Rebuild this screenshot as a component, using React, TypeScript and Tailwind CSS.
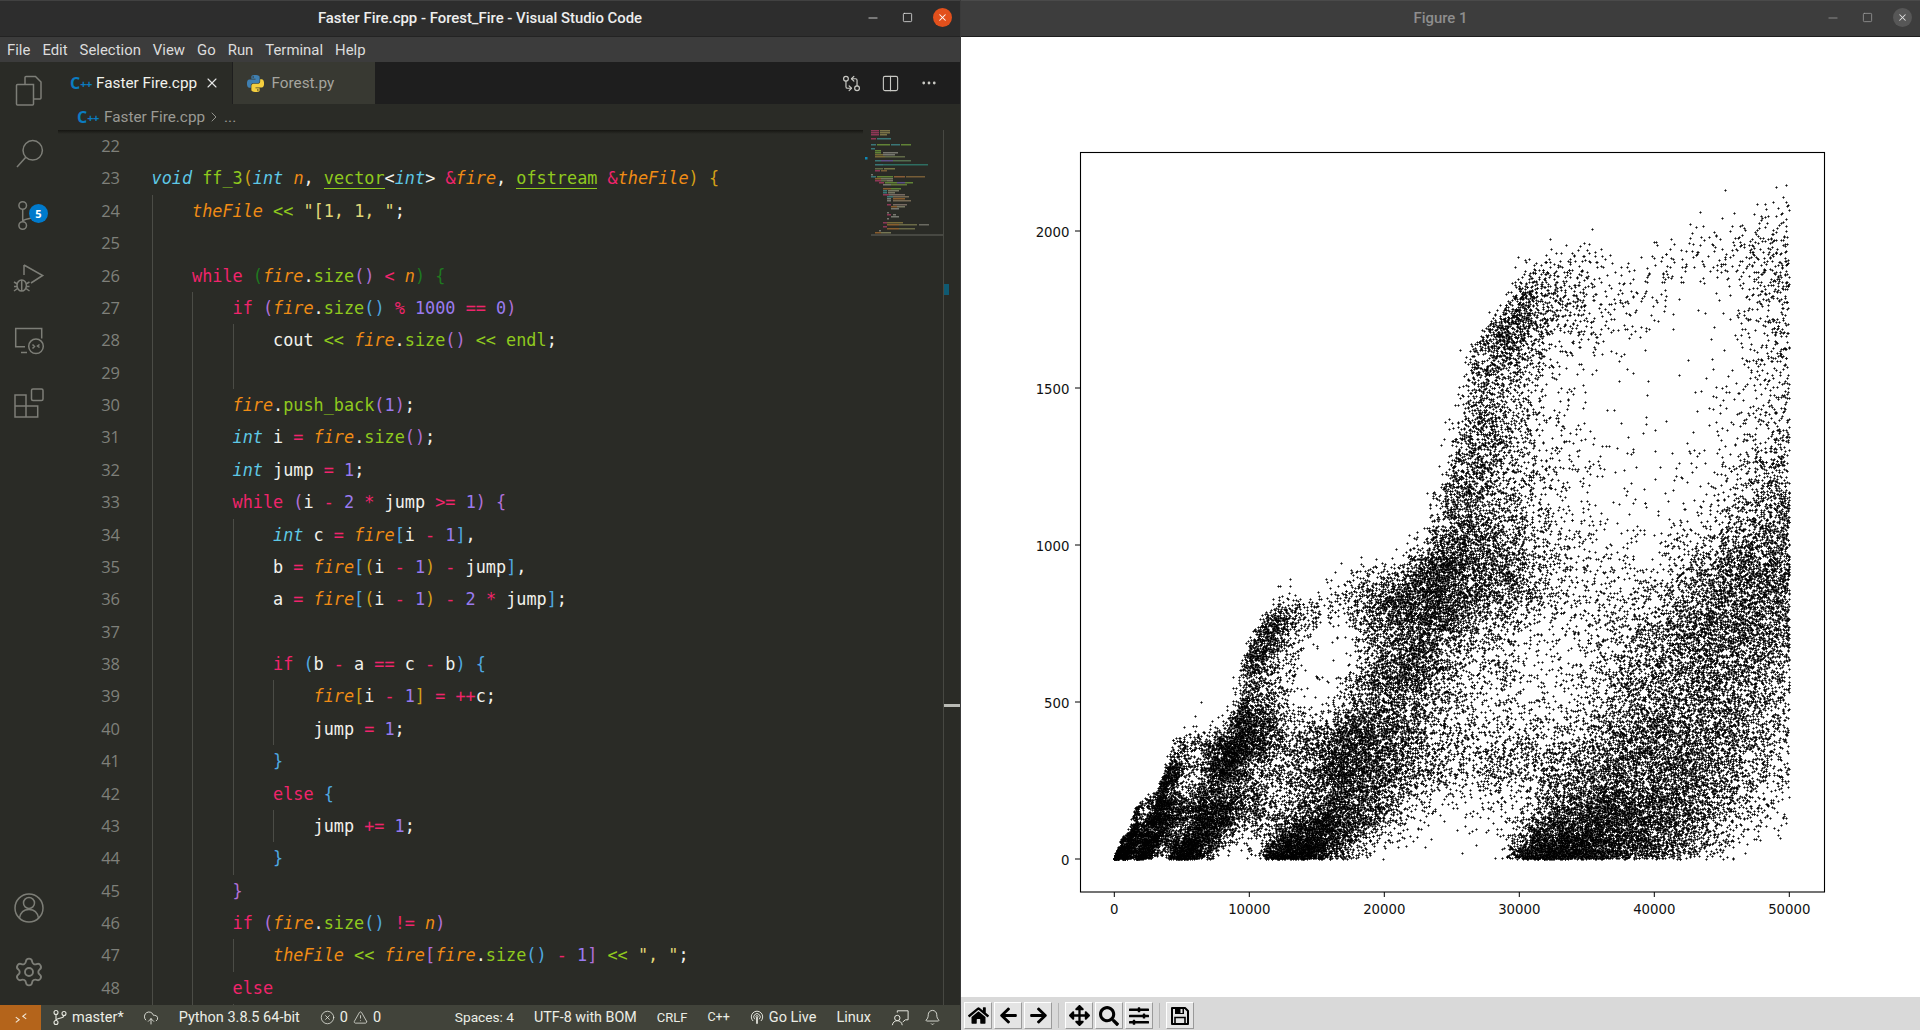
import { useMemo } from "react";
import {
  Bell,
  ChevronRight,
  CircleX,
  CloudUpload,
  Columns2,
  Ellipsis,
  GitCompareArrows,
  Minus,
  Settings,
  Square,
  TriangleAlert,
  X,
} from "lucide-react";
import {
  FaArrowLeft,
  FaArrowRight,
  FaArrowsAlt,
  FaHome,
  FaSearch,
  FaSlidersH,
} from "react-icons/fa";

const K = "text-[#f0246c]";
const T = "italic text-[#5ec8e5]";
const V = "italic text-[#f08c15]";
const F = "text-[#8fc91e]";
const U = "text-[#8fc91e] border-b border-[#8fc91e]";
const N = "text-[#9a7bf0]";
const W = "text-[#f2f2ec]";
const S = "text-[#e2d878]";
const BG = "text-[#d4a017]";
const BP = "text-[#b070d8]";
const BB = "text-[#4fa8e0]";
const BD = "text-[#1f7a1f]";

type Seg = [string, string];
type Row = { n: number; g: number; s: Seg[] };

const fireCall = (a: string): Seg[] => [
  ["fire", V],
  [".", W],
  ["size", F],
  ["(", a],
  [")", a],
];

const rows: Row[] = [
  { n: 22, g: 0, s: [] },
  {
    n: 23,
    g: 0,
    s: [
      ["void", T], [" ", W], ["ff_3", F], ["(", BG], ["int", T], [" ", W], ["n", V], [", ", W],
      ["vector", U], ["<", W], ["int", T], ["> ", W], ["&", K], ["fire", V], [", ", W],
      ["ofstream", U], [" ", W], ["&", K], ["theFile", V], [")", BG], [" ", W], ["{", BG],
    ],
  },
  { n: 24, g: 1, s: [["theFile", V], [" ", W], ["<<", F], [" ", W], ['"[1, 1, "', S], [";", W]] },
  { n: 25, g: 1, s: [] },
  {
    n: 26,
    g: 1,
    s: [["while", K], [" ", W], ["(", BD], ...fireCall(BP), [" ", W], ["<", K], [" ", W], ["n", V], [")", BD], [" ", W], ["{", BD]],
  },
  {
    n: 27,
    g: 2,
    s: [["if", K], [" ", W], ["(", BP], ...fireCall(BB), [" ", W], ["%", K], [" ", W], ["1000", N], [" ", W], ["==", K], [" ", W], ["0", N], [")", BP]],
  },
  {
    n: 28,
    g: 3,
    s: [["cout", W], [" ", W], ["<<", F], [" ", W], ...fireCall(BP), [" ", W], ["<<", F], [" ", W], ["endl", F], [";", W]],
  },
  { n: 29, g: 3, s: [] },
  { n: 30, g: 2, s: [["fire", V], [".", W], ["push_back", F], ["(", BP], ["1", N], [")", BP], [";", W]] },
  { n: 31, g: 2, s: [["int", T], [" i ", W], ["=", K], [" ", W], ...fireCall(BP), [";", W]] },
  { n: 32, g: 2, s: [["int", T], [" jump ", W], ["=", K], [" ", W], ["1", N], [";", W]] },
  {
    n: 33,
    g: 2,
    s: [["while", K], [" ", W], ["(", BP], ["i ", W], ["-", K], [" ", W], ["2", N], [" ", W], ["*", K], [" jump ", W], [">=", K], [" ", W], ["1", N], [")", BP], [" ", W], ["{", BP]],
  },
  {
    n: 34,
    g: 3,
    s: [["int", T], [" c ", W], ["=", K], [" ", W], ["fire", V], ["[", BB], ["i ", W], ["-", K], [" ", W], ["1", N], ["]", BB], [",", W]],
  },
  {
    n: 35,
    g: 3,
    s: [["b ", W], ["=", K], [" ", W], ["fire", V], ["[", BB], ["(", BG], ["i ", W], ["-", K], [" ", W], ["1", N], [")", BG], [" ", W], ["-", K], [" jump", W], ["]", BB], [",", W]],
  },
  {
    n: 36,
    g: 3,
    s: [["a ", W], ["=", K], [" ", W], ["fire", V], ["[", BB], ["(", BG], ["i ", W], ["-", K], [" ", W], ["1", N], [")", BG], [" ", W], ["-", K], [" ", W], ["2", N], [" ", W], ["*", K], [" jump", W], ["]", BB], [";", W]],
  },
  { n: 37, g: 3, s: [] },
  {
    n: 38,
    g: 3,
    s: [["if", K], [" ", W], ["(", BB], ["b ", W], ["-", K], [" a ", W], ["==", K], [" c ", W], ["-", K], [" b", W], [")", BB], [" ", W], ["{", BB]],
  },
  {
    n: 39,
    g: 4,
    s: [["fire", V], ["[", BG], ["i ", W], ["-", K], [" ", W], ["1", N], ["]", BG], [" ", W], ["=", K], [" ", W], ["++", K], ["c;", W]],
  },
  { n: 40, g: 4, s: [["jump ", W], ["=", K], [" ", W], ["1", N], [";", W]] },
  { n: 41, g: 3, s: [["}", BB]] },
  { n: 42, g: 3, s: [["else", K], [" ", W], ["{", BB]] },
  { n: 43, g: 4, s: [["jump ", W], ["+=", K], [" ", W], ["1", N], [";", W]] },
  { n: 44, g: 3, s: [["}", BB]] },
  { n: 45, g: 2, s: [["}", BP]] },
  {
    n: 46,
    g: 2,
    s: [["if", K], [" ", W], ["(", BP], ...fireCall(BB), [" ", W], ["!=", K], [" ", W], ["n", V], [")", BP]],
  },
  {
    n: 47,
    g: 3,
    s: [["theFile", V], [" ", W], ["<<", F], [" ", W], ["fire", V], ["[", BP], ...fireCall(BB), [" ", W], ["-", K], [" ", W], ["1", N], ["]", BP], [" ", W], ["<<", F], [" ", W], ['", "', S], [";", W]],
  },
  { n: 48, g: 2, s: [["else", K]] },
];

const minimapRows: [number, [number, number, string][]][] = [
  [0, [[8, 16, "#a83a62"], [17, 27, "#8f8550"]]],
  [2, [[8, 16, "#a83a62"], [17, 27, "#8f8550"]]],
  [4, [[8, 16, "#a83a62"], [17, 24, "#8f8550"]]],
  [8, [[8, 13, "#a83a62"], [14, 28, "#3f8a8c"]]],
  [14, [[8, 13, "#3f8a8c"], [14, 27, "#6f9a3a"], [28, 37, "#3f8a8c"], [38, 48, "#6f9a3a"]]],
  [18, [[8, 12, "#3f8a8c"]]],
  [20, [[12, 18, "#6f9a3a"]]],
  [22, [[12, 18, "#6f9a3a"], [20, 35, "#8a8a80"]]],
  [24, [[12, 20, "#8a7a3a"], [20, 32, "#8a8a80"]]],
  [26, [[12, 22, "#8a7a3a"], [22, 42, "#6f7a50"]]],
  [30, [[12, 18, "#3f8a8c"], [18, 30, "#6a5aa0"], [30, 48, "#5f7f5a"]]],
  [34, [[12, 20, "#3f8a8c"], [20, 40, "#2f7f70"], [40, 65, "#2f7f70"]]],
  [38, [[12, 20, "#6f7a50"], [21, 32, "#8a8a50"]]],
  [40, [[12, 17, "#a83a62"], [18, 24, "#8a6a3a"]]],
  [44, [[8, 10, "#8a8a80"]]],
  [46, [[8, 13, "#3f8a8c"], [14, 30, "#6f9a3a"], [31, 42, "#a06a3a"], [43, 62, "#8a6a3a"]]],
  [48, [[12, 18, "#a06a30"], [18, 30, "#8a8a70"]]],
  [50, [[12, 18, "#a83a62"], [18, 24, "#6f7a50"], [24, 30, "#8a8a70"]]],
  [52, [[16, 21, "#a83a62"], [22, 34, "#6f9a3a"], [34, 42, "#6a5aa0"], [42, 50, "#6f9a3a"]]],
  [54, [[20, 28, "#8a8a80"], [28, 44, "#6f8a3a"]]],
  [58, [[20, 28, "#a06a30"], [28, 38, "#6f9a3a"]]],
  [60, [[20, 24, "#3f8a8c"], [25, 36, "#8a8a70"]]],
  [62, [[20, 24, "#3f8a8c"], [25, 32, "#8a8a70"]]],
  [64, [[20, 26, "#a83a62"], [26, 42, "#8a7a70"]]],
  [66, [[24, 30, "#3f8a8c"], [30, 46, "#8a7a60"]]],
  [68, [[24, 28, "#8a8a80"], [30, 42, "#a06a30"]]],
  [70, [[24, 28, "#8a8a80"], [30, 48, "#8a7a60"]]],
  [74, [[24, 28, "#a83a62"], [30, 44, "#8a7a70"]]],
  [76, [[28, 34, "#a06a30"], [34, 42, "#8a8a70"]]],
  [78, [[28, 36, "#8a8a80"]]],
  [82, [[24, 26, "#8a8a80"]]],
  [84, [[24, 28, "#a83a62"], [30, 33, "#8a8a80"]]],
  [86, [[28, 36, "#8a8a80"]]],
  [88, [[24, 26, "#8a8a80"]]],
  [92, [[20, 24, "#a83a62"], [24, 40, "#8a7a40"]]],
  [94, [[24, 36, "#a06a30"], [36, 54, "#7a7a50"], [56, 66, "#7a7a70"]]],
  [96, [[20, 24, "#a83a62"]]],
  [98, [[24, 36, "#a06a30"], [36, 52, "#7a7a50"]]],
  [100, [[16, 18, "#8a8a80"]]],
  [102, [[12, 18, "#a06a30"], [18, 28, "#8a8a60"]]],
];

function computeFire(count: number) {
  const a = new Int32Array(count);
  const seen = new Int32Array(12000);
  for (let n = 0; n < count; n++) {
    const stamp = n + 1;
    for (let k = 1; n - 2 * k >= 0; k++) {
      const v = 2 * a[n - k] - a[n - 2 * k];
      if (v > 0) seen[v] = stamp;
    }
    let v = 1;
    while (seen[v] === stamp) v++;
    a[n] = v;
  }
  return a;
}

function CppIcon() {
  return (
    <span className="w-[20px] shrink-0 font-['Open_Sans',sans-serif] font-bold text-[#0b7cc1] text-[16px] leading-none whitespace-nowrap">
      C<span className="text-[11px] tracking-[-0.5px] align-[1px]">++</span>
    </span>
  );
}

function PythonIcon() {
  return (
    <svg viewBox="0 0 24 24" className="w-[17px] h-[17px] shrink-0">
      <path
        fill="#3f7fb0"
        d="M14.25.18l.9.2.73.26.59.3.45.32.34.34.25.34.16.33.1.3.04.26.02.2-.01.13V8.5l-.05.63-.13.55-.21.46-.26.38-.3.31-.33.25-.35.19-.35.14-.33.1-.3.07-.26.04-.21.02H8.77l-.69.05-.59.14-.5.22-.41.27-.33.32-.27.35-.2.36-.15.37-.1.35-.07.32-.04.27-.02.21v3.06H3.17l-.21-.03-.28-.07-.32-.12-.35-.18-.36-.26-.36-.36-.35-.46-.32-.59-.28-.73-.21-.88-.14-1.05-.05-1.23.06-1.22.16-1.04.24-.87.32-.71.36-.57.4-.44.42-.33.42-.24.4-.16.36-.1.32-.05.24-.01h.16l.06.01h8.16v-.83H6.18l-.01-2.75-.02-.37.05-.34.11-.31.17-.28.25-.26.31-.23.38-.2.44-.18.51-.15.58-.12.64-.1.71-.06.77-.04.84-.02 1.27.05zm-6.3 1.98l-.23.33-.08.41.08.41.23.34.33.22.41.09.41-.09.33-.22.23-.34.08-.41-.08-.41-.23-.33-.33-.22-.41-.09-.41.09z"
      />
      <path
        fill="#f5cf3e"
        d="M21.04 6.11l.28.06.32.12.35.18.36.27.36.35.35.47.32.59.28.73.21.88.14 1.04.05 1.23-.06 1.23-.16 1.04-.24.86-.32.71-.36.57-.4.45-.42.33-.42.24-.4.16-.36.09-.32.05-.24.02-.16-.01h-8.22v.82h5.84l.01 2.76.02.36-.05.34-.11.31-.17.29-.25.25-.31.24-.38.2-.44.17-.51.15-.58.13-.64.09-.71.07-.77.04-.84.01-1.27-.04-1.07-.14-.9-.2-.73-.25-.59-.3-.45-.33-.34-.34-.25-.34-.16-.33-.1-.3-.04-.25-.02-.2.01-.13v-5.34l.05-.64.13-.54.21-.46.26-.38.3-.32.33-.24.35-.2.35-.14.33-.1.3-.06.26-.04.21-.02.13-.01h5.84l.69-.05.59-.14.5-.21.41-.28.33-.32.27-.35.2-.36.15-.36.1-.35.07-.32.04-.28.02-.21V6.07h2.09l.14.01zm-6.47 14.25l-.23.33-.08.41.08.41.23.33.33.23.41.08.41-.08.33-.23.23-.33.08-.41-.08-.41-.23-.33-.33-.23-.41-.08-.41.08z"
      />
    </svg>
  );
}

function ActivityBar() {
  const iconClass = "w-8 h-8 fill-none stroke-[#7d7e77] stroke-[1.5]";
  return (
    <div className="w-[58px] shrink-0 flex flex-col items-center pt-[12px] pb-[17px] gap-[30.6px]">
      <svg viewBox="0 0 32 32" className={iconClass}>
        <path d="M12 10V3.5a1 1 0 0 1 1-1h9.5l5.5 5.5v16a1 1 0 0 1-1 1h-6" />
        <path d="M20.5 10.500V30a1 1 0 0 1-1 1H4.500a1 1 0 0 1-1-1V11.500a1 1 0 0 1 1-1z" />
      </svg>
      <svg viewBox="0 0 32 32" className={iconClass}>
        <circle cx="19.700" cy="13.300" r="9.700" />
        <path d="M12.800 20.300L4 30" />
      </svg>
      <div className="relative w-8 h-8">
        <svg viewBox="0 0 32 32" className={iconClass}>
          <circle cx="9.700" cy="6.500" r="3.800" />
          <circle cx="9.700" cy="26.500" r="3.800" />
          <circle cx="22" cy="12.500" r="3.800" />
          <path d="M9.700 10.300v12.400M22 16.300c0 4-12.300 3-12.300 6.400" />
        </svg>
        <span className="absolute left-[15.800px] top-[5.100px] w-[19px] h-[19px] rounded-full bg-[#007acc] text-white text-[11px] font-bold flex items-center justify-center font-['Open_Sans',sans-serif]">
          5
        </span>
      </div>
      <svg viewBox="0 0 32 32" className={iconClass}>
        <path d="M11 3L29.700 13.500L18 21M11 3V13" />
        <ellipse cx="8.700" cy="23.500" rx="4.700" ry="5.500" />
        <path d="M8.700 18v11M1 20l3.500 2M16.500 20l-3.500 2M1 29l3.500-2.500M16.500 29L13 26.500M1 24.500h3M13 24.500h3.500" />
      </svg>
      <svg viewBox="0 0 32 32" className={iconClass}>
        <path d="M12 22.800H2.700V4.600h26v10" />
        <path d="M8 28.500h6" />
        <circle cx="23" cy="22.300" r="7.300" />
        <path d="M19.500 20.500l2 2-2 2M26.500 20.500l-2 1.500 2 1.500" />
      </svg>
      <svg viewBox="0 0 32 32" className={iconClass}>
        <path d="M2 8h11v22H2zM2 19h22.700v11H13" />
        <rect x="18.500" y="2" width="11.500" height="11.500" rx="1.500" />
      </svg>
      <svg viewBox="0 0 32 32" className={`${iconClass} mt-auto`}>
        <circle cx="16" cy="16" r="14" />
        <circle cx="16" cy="11" r="5.500" />
        <path d="M6.500 26c1-6 5-8.500 9.500-8.500s8.500 2.500 9.500 8.500" />
      </svg>
      <Settings size={32} strokeWidth={1.4} className="text-[#7d7e77] mt-[1.400px]" />
    </div>
  );
}

function TabBar() {
  return (
    <div className="h-[42px] shrink-0 flex items-stretch bg-[#1e1e1e]">
      <div className="w-[173.500px] bg-[#2a2b26] flex items-center pl-[12px] text-[#f2f2ec]">
        <CppIcon />
        <span className="ml-[6px] text-[15.300px]">Faster Fire.cpp</span>
        <X size={16} strokeWidth={1.6} className="ml-[7px] text-[#e8e8e8]" />
      </div>
      <div className="w-[142.500px] ml-[1px] bg-[#383932] flex items-center pl-[14px] text-[#a5a59f]">
        <PythonIcon />
        <span className="ml-[8px] text-[15.300px]">Forest.py</span>
      </div>
      <div className="ml-auto flex items-center pr-[22px] text-[#c9c9c4] gap-[20px]">
        <GitCompareArrows size={19} strokeWidth={1.5} />
        <Columns2 size={19} strokeWidth={1.4} />
        <Ellipsis size={18} strokeWidth={1.7} />
      </div>
    </div>
  );
}

function CodeRow({ row }: { row: Row }) {
  return (
    <div className="h-[32.380px] flex items-stretch">
      <div className="w-[62px] text-right font-['Open_Sans',sans-serif] text-[16.500px] leading-[32px] text-[#7f807a]">
        {row.n > 0 ? row.n : ""}
      </div>
      <div className="ml-[31.500px] flex items-stretch whitespace-pre font-['DejaVu_Sans_Mono',monospace] text-[16.830px] leading-[32px] overflow-visible">
        {Array.from({ length: row.g }).map((_, i) => (
          <span key={i} className="w-[40.500px] shrink-0 border-l border-[#4b4c46]" />
        ))}
        <span>
          {row.s.map((seg, i) => (
            <span key={i} className={seg[1]}>
              {seg[0]}
            </span>
          ))}
        </span>
      </div>
    </div>
  );
}

function Minimap() {
  return (
    <div className="w-[80px] shrink-0">
      <svg width="80" height="110" viewBox="0 0 80 110">
        <g opacity="0.8">
          {minimapRows.map(([y, parts]) =>
            parts.map(([x1, x2, c]) => (
              <rect key={`${y}-${x1}`} x={x1} y={y} width={x2 - x1} height={1.500} fill={c} />
            )),
          )}
        </g>
        <rect x="2" y="27" width="2.500" height="2.500" fill="#0e88b4" />
        <rect x="8" y="104" width="72" height="2" fill="#474842" />
      </svg>
    </div>
  );
}

function StatusBar() {
  const base = "flex items-center text-[#eceee6] whitespace-nowrap";
  const itemClass = `${base} text-[14.500px]`;
  return (
    <div className="h-[25px] shrink-0 bg-[#41433a] flex items-stretch">
      <div className="w-[41px] bg-[#b4641b] flex items-center justify-center">
        <svg viewBox="0 0 16 16" className="w-[14px] h-[14px] fill-none stroke-[#f2e8d8] stroke-[1.2]">
          <path d="M2 13l4-3-4-3M14 3l-4 3 4 3" />
        </svg>
      </div>
      <div className={`${itemClass} ml-[11px]`}>
        <svg viewBox="0 0 16 16" className="w-[16px] h-[17px] fill-none stroke-[#e6e7df] stroke-[1.1]">
          <circle cx="4" cy="3" r="2" />
          <circle cx="4" cy="13" r="2" />
          <circle cx="12" cy="4" r="2" />
          <path d="M4 5v6M12 6c0 3.500-8 2-8 5" />
        </svg>
        <span className="ml-[4px]">master*</span>
      </div>
      <div className={`${itemClass} ml-[19px]`}>
        <CloudUpload size={16} strokeWidth={1.3} />
      </div>
      <div className={`${itemClass} ml-[20px]`}>Python 3.8.5 64-bit</div>
      <div className={`${itemClass} ml-[20px]`}>
        <CircleX size={15} strokeWidth={1.2} />
        <span className="ml-[5px]">0</span>
        <TriangleAlert size={15} strokeWidth={1.2} className="ml-[5px]" />
        <span className="ml-[5px]">0</span>
      </div>
      <div className={`${base} ml-auto text-[13.700px]`}>Spaces: 4</div>
      <div className={`${base} ml-[20px] text-[14.300px]`}>UTF-8 with BOM</div>
      <div className={`${base} ml-[20px] text-[13px]`}>CRLF</div>
      <div className={`${base} ml-[20px] text-[12.500px]`}>C++</div>
      <div className={`${itemClass} ml-[20px]`}>
        <svg viewBox="0 0 16 16" className="w-[14px] h-[15px] fill-none stroke-[#e6e7df] stroke-[1.1]">
          <path d="M3.500 12a6.500 6.500 0 1 1 9 0M5.500 10a3.700 3.700 0 1 1 5 0" />
          <circle cx="8" cy="7" r="1.200" />
          <path d="M8 8.500V15" strokeWidth="2" />
        </svg>
        <span className="ml-[5px]">Go Live</span>
      </div>
      <div className={`${itemClass} ml-[20px]`}>Linux</div>
      <div className={`${itemClass} ml-[20px]`}>
        <svg viewBox="0 0 20 20" className="w-[18px] h-[18px] fill-none stroke-[#e6e7df] stroke-[1.1]">
          <circle cx="7" cy="10" r="3" />
          <path d="M1.500 18c.5-3.500 3-5 5.500-5s5 1.500 5.500 5M7 4V2h12v10h-3l-3 2.500" />
        </svg>
      </div>
      <div className={`${itemClass} ml-[15px] mr-[19px]`}>
        <Bell size={17} strokeWidth={1.2} />
      </div>
    </div>
  );
}

function VsCodeWindow() {
  const menu = ["File", "Edit", "Selection", "View", "Go", "Run", "Terminal", "Help"];
  return (
    <div className="w-[960px] shrink-0 flex flex-col bg-[#2a2b26] font-['Roboto',sans-serif]">
      <div className="h-[37px] shrink-0 bg-[#2d2d2d] border-t border-[#414141] border-b-[#232323] border-b relative flex items-center justify-center">
        <span className="text-[14.900px] font-medium text-[#eeeeee]">
          Faster Fire.cpp - Forest_Fire - Visual Studio Code
        </span>
        <div className="absolute right-[8px] top-[7px] flex items-center text-[#e8e8e8]">
          <Minus size={14} strokeWidth={1.4} />
          <Square size={11} strokeWidth={1.7} className="ml-[22px]" />
          <span className="ml-[20px] w-[19px] h-[19px] rounded-full bg-[#e2501c] flex items-center justify-center text-white">
            <X size={11} strokeWidth={2.2} />
          </span>
        </div>
      </div>
      <div className="h-[25px] shrink-0 bg-[#3c3c3c] flex items-center pl-[7px] pt-[1px] gap-[12px] text-[14.900px] text-[#dcdcdc]">
        {menu.map((m) => (
          <span key={m}>{m}</span>
        ))}
      </div>
      <div className="flex-1 min-h-0 flex">
        <ActivityBar />
        <div className="flex-1 min-w-0 flex flex-col">
          <TabBar />
          <div className="h-[26px] shrink-0 flex items-center pl-[19px] text-[15.300px] text-[#9a9a94]">
            <CppIcon />
            <span className="ml-[7px]">Faster Fire.cpp</span>
            <ChevronRight size={16} strokeWidth={1.4} className="ml-[1px]" />
            <span className="ml-[2px]">...</span>
          </div>
          <div className="flex-1 min-h-0 flex relative">
            <div className="absolute left-0 top-0 w-[805px] h-[4px] bg-gradient-to-b from-[#161612] to-transparent" />
            <div className="flex-1 min-w-0 overflow-hidden">
              {rows.map((row) => (
                <CodeRow key={row.n} row={row} />
              ))}
              <CodeRow row={{ n: 0, g: 3, s: [] }} />
            </div>
            <Minimap />
            <div className="w-[17px] shrink-0 border-l border-[#474842] relative">
              <div className="absolute left-0 top-[154px] w-[5px] h-[11px] bg-[#0f5a72]" />
              <div className="absolute left-0 right-0 top-[574px] h-[3px] bg-[#b9bab4]" />
            </div>
          </div>
        </div>
      </div>
      <StatusBar />
    </div>
  );
}

function ScatterPlot() {
  const { arms, centers } = useMemo(() => {
    const data = computeFire(50000);
    const armPaths = ["", "", "", ""];
    let centerPath = "";
    for (let i = 0; i < data.length; i++) {
      const x = Math.round(153.300 + i * 0.0135);
      const y = Math.round(823 - data[i] * 0.314);
      armPaths[i % 4] += `M${x - 1} ${y}h3v1h-3zM${x} ${y - 1}h1v3h-1z`;
      centerPath += `M${x} ${y}h1v1h-1z`;
    }
    return { arms: armPaths, centers: centerPath };
  }, []);

  const xTicks = [0, 10000, 20000, 30000, 40000, 50000];
  const yTicks = [0, 500, 1000, 1500, 2000];

  return (
    <svg width="959" height="960" viewBox="0 1 959 960" className="block">
      <g shapeRendering="crispEdges">
        {arms.map((d, i) => (
          <path key={i} d={d} fill="#000" opacity={0.55} />
        ))}
        <path d={centers} fill="#000" opacity={0.88} />
      </g>
      <rect x="119.500" y="116.500" width="744" height="739.500" fill="none" stroke="#000" strokeWidth="1.100" />
      {xTicks.map((t) => {
        const x = 153.300 + t * 0.0135;
        return (
          <g key={t}>
            <line x1={x} x2={x} y1={856} y2={861} stroke="#000" strokeWidth="1" />
            <text x={x} y={877.500} textAnchor="middle" fontSize="13.300" fontFamily="DejaVu Sans, sans-serif" fill="#111">
              {t}
            </text>
          </g>
        );
      })}
      {yTicks.map((t) => {
        const y = 823 - t * 0.314;
        return (
          <g key={t}>
            <line x1={114} x2={119} y1={y} y2={y} stroke="#000" strokeWidth="1" />
            <text x={108.500} y={y + 5.500} textAnchor="end" fontSize="13.300" fontFamily="DejaVu Sans, sans-serif" fill="#111">
              {t}
            </text>
          </g>
        );
      })}
    </svg>
  );
}

function ToolButton({ children }: { children: React.ReactNode }) {
  return (
    <div className="w-[28px] h-[27px] bg-[#e4e4e4] border border-t-white border-l-white border-r-[#9a9a9a] border-b-[#9a9a9a] flex items-center justify-center text-black">
      {children}
    </div>
  );
}

function FloppyIcon() {
  return (
    <svg viewBox="0 0 20 20" className="w-[20px] h-[20px]">
      <path d="M2 2h13l3 3v13H2z" fill="none" stroke="#000" strokeWidth="2" strokeLinejoin="round" />
      <path d="M5 2h9v6H5z" fill="#000" />
      <rect x="10.500" y="3" width="2" height="4" fill="#e4e4e4" />
      <path d="M5 11.500h10V18H5z" fill="none" stroke="#000" strokeWidth="1.600" />
    </svg>
  );
}

function FigureWindow() {
  return (
    <div className="flex-1 min-w-0 flex flex-col bg-white border-l border-[#3a3a3a] font-['Roboto',sans-serif]">
      <div className="h-[37px] shrink-0 bg-[#3d3d3d] border-t border-[#4a4a4a] border-b border-b-[#1e1e1e] relative flex items-center justify-center">
        <span className="text-[14.900px] font-medium text-[#8e8e8e]">Figure 1</span>
        <div className="absolute right-[8px] top-[7px] flex items-center text-[#9c9c9c]">
          <Minus size={14} strokeWidth={1.4} />
          <Square size={11} strokeWidth={1.7} className="ml-[22px]" />
          <span className="ml-[20px] w-[19px] h-[19px] rounded-full bg-[#575757] flex items-center justify-center text-[#e2e2e2]">
            <X size={11} strokeWidth={2.2} />
          </span>
        </div>
      </div>
      <div className="flex-1 min-h-0 overflow-hidden">
        <ScatterPlot />
      </div>
      <div className="h-[33px] shrink-0 bg-[#d9d9d9] flex items-end pl-[3px] pb-[1px] gap-[2px]">
        <ToolButton><FaHome size={21} /></ToolButton>
        <ToolButton><FaArrowLeft size={19} /></ToolButton>
        <ToolButton><FaArrowRight size={19} /></ToolButton>
        <div className="w-px h-[25px] mb-[1px] bg-[#b5b5b5] mx-[4px]" />
        <ToolButton><FaArrowsAlt size={21} /></ToolButton>
        <ToolButton><FaSearch size={20} /></ToolButton>
        <ToolButton><FaSlidersH size={20} /></ToolButton>
        <div className="w-px h-[25px] mb-[1px] bg-[#b5b5b5] mx-[4px]" />
        <ToolButton><FloppyIcon /></ToolButton>
      </div>
    </div>
  );
}

export default function App() {
  return (
    <div className="w-[1920px] h-[1030px] flex overflow-hidden">
      <VsCodeWindow />
      <FigureWindow />
    </div>
  );
}
